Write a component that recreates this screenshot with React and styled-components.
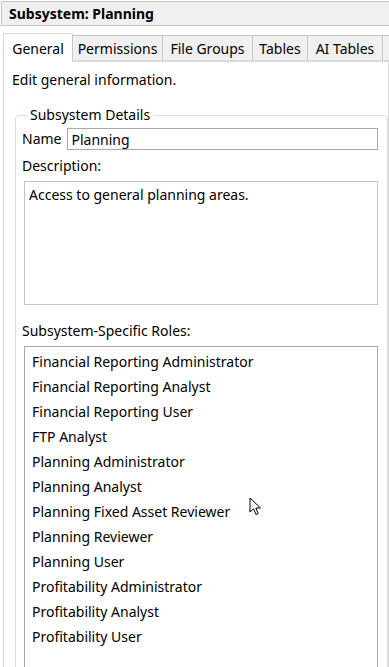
import React from "react";
import styled, { createGlobalStyle } from "styled-components";

const GlobalStyle = createGlobalStyle`
  html, body {
    margin: 0;
    padding: 0;
    background: #ffffff;
  }
  body {
    font-family: "Noto Sans", "Open Sans", sans-serif;
    font-size: 14px;
    color: #000000;
    overflow: hidden;
  }
`;

const Window = styled.div`
  position: relative;
  width: 389px;
  height: 667px;
  overflow: hidden;
  background: #ffffff;
`;

const TitleBar = styled.div`
  margin: 1px 0 0 1px;
  height: 23px;
  border: 1px solid #c6c6c6;
  border-right: none;
  background: #f0f0f0;
  display: flex;
  align-items: center;
  padding-left: 7px;
  font-weight: 700;
  font-size: 14px;
`;

const TabStrip = styled.div`
  display: flex;
  align-items: flex-end;
  height: 28px;
  margin-top: 7px;
  padding-left: 3px;
  position: relative;
  z-index: 1;
`;

const Tab = styled.div`
  box-sizing: border-box;
  flex: 0 0 ${(p) => p.$w}px;
  height: ${(p) => (p.$active ? 29 : 26)}px;
  margin-bottom: ${(p) => (p.$active ? -1 : 0)}px;
  margin-left: -1px;
  border: 1px solid ${(p) => (p.$active ? "#d9d9d9" : "#c6c6c6")};
  border-bottom: ${(p) => (p.$active ? "none" : "1px solid #d9d9d9")};
  background: ${(p) => (p.$active ? "#ffffff" : "#f0f0f0")};
  display: flex;
  align-items: center;
  justify-content: center;
  white-space: nowrap;
  overflow: hidden;
  &:first-child {
    margin-left: 0;
  }
`;

const Panel = styled.div`
  margin-left: 3px;
  border-left: 1px solid #d9d9d9;
  border-right: 1px solid #d9d9d9;
  border-top: 1px solid #d9d9d9;
  height: 620px;
  padding: 8px 0 0 8px;
`;

const Intro = styled.div`
  line-height: 20px;
`;

const GroupBox = styled.fieldset`
  margin: 16px 0 0 3px;
  padding: 2px 9px 0 6px;
  border: 1px solid #dcdcdc;
  border-radius: 4px;
  min-width: 0;
  height: 600px;
`;

const Legend = styled.legend`
  padding: 0 3px;
  margin-left: 5px;
  line-height: 18px;
`;

const FieldRow = styled.div`
  display: flex;
  align-items: center;
  gap: 6px;
  margin-top: 2px;
`;

const Label = styled.div`
  line-height: 20px;
  margin-top: ${(p) => p.$top || 0}px;
`;

const TextInput = styled.div`
  flex: 1;
  height: 20px;
  border: 1px solid #a9a9a9;
  display: flex;
  align-items: center;
  padding-left: 3px;
`;

const TextArea = styled.div`
  margin: 5px 0 0 2px;
  border: 1px solid #c3c3c3;
  padding: 3px 4px;
  line-height: 20px;
  box-sizing: border-box;
  height: 124px;
`;

const ListBox = styled.div`
  margin: 5px 0 0 2px;
  border: 1px solid #a9a9a9;
  height: 400px;
  padding: 2px 0 0 7px;
`;

const ListItem = styled.div`
  height: 25px;
  line-height: 25px;
  white-space: nowrap;
`;

const Cursor = styled.svg`
  position: absolute;
  left: 249px;
  top: 497px;
  pointer-events: none;
`;

const tabs = [
  { label: "General", w: 70, active: true },
  { label: "Permissions", w: 91 },
  { label: "File Groups", w: 91 },
  { label: "Tables", w: 56 },
  { label: "AI Tables", w: 76 },
  { label: "", w: 20 },
];

const roles = [
  "Financial Reporting Administrator",
  "Financial Reporting Analyst",
  "Financial Reporting User",
  "FTP Analyst",
  "Planning Administrator",
  "Planning Analyst",
  "Planning Fixed Asset Reviewer",
  "Planning Reviewer",
  "Planning User",
  "Profitability Administrator",
  "Profitability Analyst",
  "Profitability User",
];

const App = () => {
  return (
    <Window>
      <GlobalStyle />
      <TitleBar>Subsystem: Planning</TitleBar>
      <TabStrip>
        {tabs.map((t, i) => (
          <Tab key={i} $w={t.w} $active={t.active}>
            {t.label}
          </Tab>
        ))}
      </TabStrip>
      <Panel>
        <Intro>Edit general information.</Intro>
        <GroupBox>
          <Legend>Subsystem Details</Legend>
          <FieldRow>
            <Label>Name</Label>
            <TextInput>Planning</TextInput>
          </FieldRow>
          <Label $top={6}>Description:</Label>
          <TextArea>Access to general planning areas.</TextArea>
          <Label $top={16}>Subsystem-Specific Roles:</Label>
          <ListBox>
            {roles.map((r) => (
              <ListItem key={r}>{r}</ListItem>
            ))}
          </ListBox>
        </GroupBox>
      </Panel>
      <Cursor width="13" height="20" viewBox="0 0 13 20">
        <path
          d="M1 1 L1 15 L4.5 11.8 L7 17.5 L9.2 16.5 L6.8 11 L11.5 11 Z"
          fill="#ffffff"
          stroke="#000000"
          strokeWidth="1"
          strokeLinejoin="round"
        />
      </Cursor>
    </Window>
  );
};

export default App;
